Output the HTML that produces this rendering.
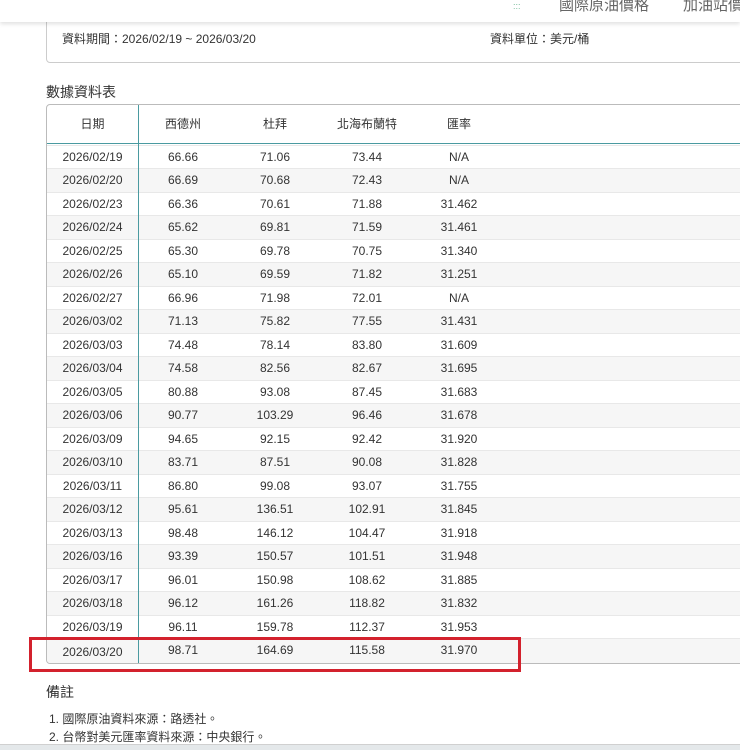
<!DOCTYPE html>
<html><head><meta charset="utf-8"><style>
*{margin:0;padding:0;box-sizing:border-box}
body{width:740px;height:750px;overflow:hidden;background:#fff;font-family:"Liberation Sans","Noto Sans CJK TC",sans-serif;color:#333;position:relative}
.top{position:absolute;left:0;top:0;width:740px;height:22px;background:#fff;box-shadow:0 2px 4px rgba(0,0,0,.12);z-index:2;overflow:hidden}
.top span{position:absolute;top:-6px;font-size:15px;color:#666;white-space:nowrap}
.info{position:absolute;left:46px;top:10px;width:720px;height:53px;border:1px solid #ccc;border-radius:4px;font-size:12px;color:#333}
.info .a{position:absolute;left:15px;top:19px}
.info .b{position:absolute;left:443px;top:19px}
h3{position:absolute;left:46px;top:82px;font-size:14px;font-weight:normal;color:#333}
.tbl{position:absolute;left:46px;top:104px;width:720px;height:560px;border:1px solid #bbb;border-radius:4px;overflow:hidden}
.row{position:absolute;left:0;width:720px;height:23.5px;font-size:12px;border-top:1px solid #e8e8e8}
.row.g{background:#f6f6f6}
.row div{position:absolute;top:0;line-height:22px;text-align:center}
.c0{left:0;width:91px}.c1{left:108px;width:56px}.c2{left:200px;width:56px}.c3{left:288px;width:64px}.c4{left:380px;width:64px}
.hd{position:absolute;left:0;top:0;width:720px;height:39px;border-bottom:1px solid #4a9aa0;font-size:12px}
.hd div{position:absolute;top:0;line-height:39px;text-align:center}
.vl{position:absolute;left:91px;top:0;width:1px;height:560px;background:#4a9aa0}
.red{position:absolute;left:29px;top:637px;width:492px;height:35px;border:3px solid #d3212d}
.note{position:absolute;left:46px;top:682px;font-size:14px}
.n{position:absolute;left:49px;font-size:12px}
.bot{position:absolute;left:0;top:744px;width:740px;height:6px;background:#e4e8ea;border-top:1px solid #d0d0d0}
</style></head><body>
<div class="top"><span style="left:513px;font-size:9px;top:1px;color:#7b9">:::</span><span style="left:559px">國際原油價格</span><span style="left:683px">加油站價格</span></div>
<div class="info"><span class="a">資料期間：2026/02/19 ~ 2026/03/20</span><span class="b">資料單位：美元/桶</span></div>
<h3>數據資料表</h3>
<div class="tbl">
<div class="hd"><div class="c0">日期</div><div class="c1">西德州</div><div class="c2">杜拜</div><div class="c3">北海布蘭特</div><div class="c4">匯率</div></div>
<div class="row" style="top:39.5px"><div class="c0">2026/02/19</div><div class="c1">66.66</div><div class="c2">71.06</div><div class="c3">73.44</div><div class="c4">N/A</div></div>
<div class="row g" style="top:63px"><div class="c0">2026/02/20</div><div class="c1">66.69</div><div class="c2">70.68</div><div class="c3">72.43</div><div class="c4">N/A</div></div>
<div class="row" style="top:86.5px"><div class="c0">2026/02/23</div><div class="c1">66.36</div><div class="c2">70.61</div><div class="c3">71.88</div><div class="c4">31.462</div></div>
<div class="row g" style="top:110px"><div class="c0">2026/02/24</div><div class="c1">65.62</div><div class="c2">69.81</div><div class="c3">71.59</div><div class="c4">31.461</div></div>
<div class="row" style="top:133.5px"><div class="c0">2026/02/25</div><div class="c1">65.30</div><div class="c2">69.78</div><div class="c3">70.75</div><div class="c4">31.340</div></div>
<div class="row g" style="top:157px"><div class="c0">2026/02/26</div><div class="c1">65.10</div><div class="c2">69.59</div><div class="c3">71.82</div><div class="c4">31.251</div></div>
<div class="row" style="top:180.5px"><div class="c0">2026/02/27</div><div class="c1">66.96</div><div class="c2">71.98</div><div class="c3">72.01</div><div class="c4">N/A</div></div>
<div class="row g" style="top:204px"><div class="c0">2026/03/02</div><div class="c1">71.13</div><div class="c2">75.82</div><div class="c3">77.55</div><div class="c4">31.431</div></div>
<div class="row" style="top:227.5px"><div class="c0">2026/03/03</div><div class="c1">74.48</div><div class="c2">78.14</div><div class="c3">83.80</div><div class="c4">31.609</div></div>
<div class="row g" style="top:251px"><div class="c0">2026/03/04</div><div class="c1">74.58</div><div class="c2">82.56</div><div class="c3">82.67</div><div class="c4">31.695</div></div>
<div class="row" style="top:274.5px"><div class="c0">2026/03/05</div><div class="c1">80.88</div><div class="c2">93.08</div><div class="c3">87.45</div><div class="c4">31.683</div></div>
<div class="row g" style="top:298px"><div class="c0">2026/03/06</div><div class="c1">90.77</div><div class="c2">103.29</div><div class="c3">96.46</div><div class="c4">31.678</div></div>
<div class="row" style="top:321.5px"><div class="c0">2026/03/09</div><div class="c1">94.65</div><div class="c2">92.15</div><div class="c3">92.42</div><div class="c4">31.920</div></div>
<div class="row g" style="top:345px"><div class="c0">2026/03/10</div><div class="c1">83.71</div><div class="c2">87.51</div><div class="c3">90.08</div><div class="c4">31.828</div></div>
<div class="row" style="top:368.5px"><div class="c0">2026/03/11</div><div class="c1">86.80</div><div class="c2">99.08</div><div class="c3">93.07</div><div class="c4">31.755</div></div>
<div class="row g" style="top:392px"><div class="c0">2026/03/12</div><div class="c1">95.61</div><div class="c2">136.51</div><div class="c3">102.91</div><div class="c4">31.845</div></div>
<div class="row" style="top:415.5px"><div class="c0">2026/03/13</div><div class="c1">98.48</div><div class="c2">146.12</div><div class="c3">104.47</div><div class="c4">31.918</div></div>
<div class="row g" style="top:439px"><div class="c0">2026/03/16</div><div class="c1">93.39</div><div class="c2">150.57</div><div class="c3">101.51</div><div class="c4">31.948</div></div>
<div class="row" style="top:462.5px"><div class="c0">2026/03/17</div><div class="c1">96.01</div><div class="c2">150.98</div><div class="c3">108.62</div><div class="c4">31.885</div></div>
<div class="row g" style="top:486px"><div class="c0">2026/03/18</div><div class="c1">96.12</div><div class="c2">161.26</div><div class="c3">118.82</div><div class="c4">31.832</div></div>
<div class="row" style="top:509.5px"><div class="c0">2026/03/19</div><div class="c1">96.11</div><div class="c2">159.78</div><div class="c3">112.37</div><div class="c4">31.953</div></div>
<div class="row g" style="top:533px;height:27px"><div class="c0" style="top:2px">2026/03/20</div><div class="c1">98.71</div><div class="c2">164.69</div><div class="c3">115.58</div><div class="c4">31.970</div></div>
<div class="vl"></div>
</div>
<div class="red"></div>
<div class="note">備註</div>
<div class="n" style="top:710px">1. 國際原油資料來源：路透社。</div>
<div class="n" style="top:728px">2. 台幣對美元匯率資料來源：中央銀行。</div>
<div class="bot"></div>
</body></html>
